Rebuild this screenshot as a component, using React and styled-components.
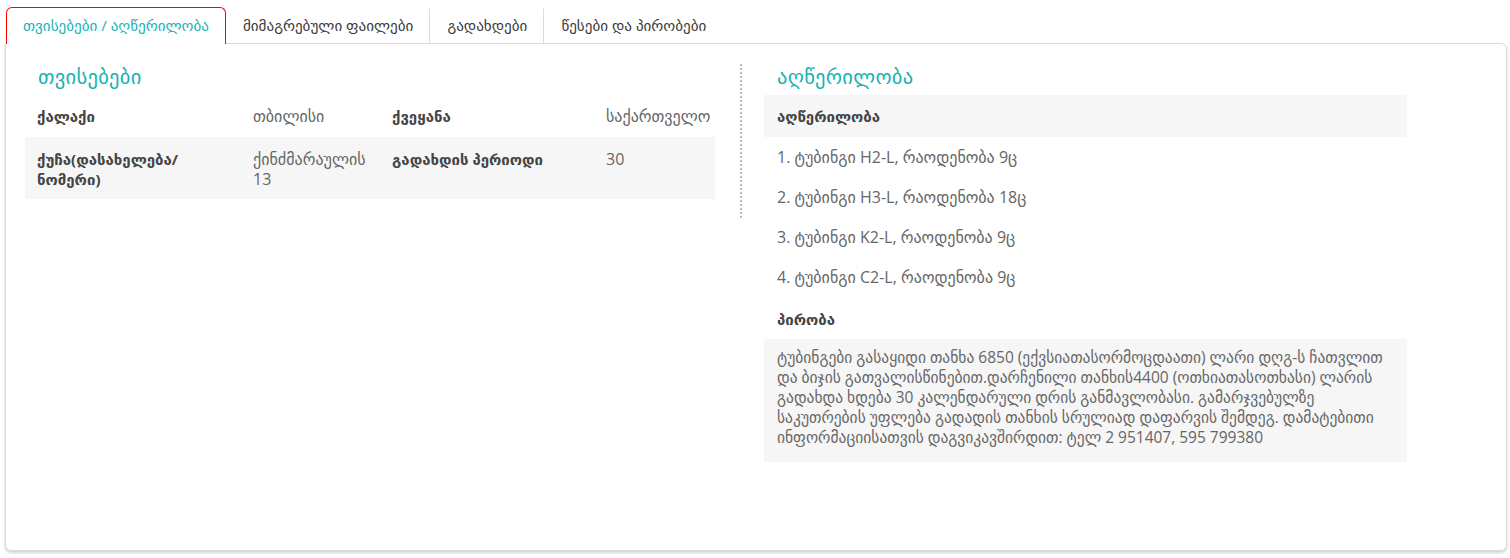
import React from 'react';
import styled, { createGlobalStyle } from 'styled-components';

const GlobalStyle = createGlobalStyle`
  body {
    margin: 0;
    background: #fff;
    font-family: "Open Sans", "DejaVu Sans", sans-serif;
    color: #555;
  }
`;

const tabs = ['თვისებები / აღწერილობა', 'მიმაგრებული ფაილები', 'გადახდები', 'წესები და პირობები'];

const properties = [
  [
    { label: 'ქალაქი', value: 'თბილისი' },
    { label: 'ქვეყანა', value: 'საქართველო' },
  ],
  [
    { label: 'ქუჩა(დასახელება/ ნომერი)', value: 'ქინძმარაულის 13' },
    { label: 'გადახდის პერიოდი', value: '30' },
  ],
];

const items = [
  '1. ტუბინგი H2-L, რაოდენობა 9ც',
  '2. ტუბინგი H3-L, რაოდენობა 18ც',
  '3. ტუბინგი K2-L, რაოდენობა 9ც',
  '4. ტუბინგი C2-L, რაოდენობა 9ც',
];

// broken the same way the original block wraps
const condition = [
  'ტუბინგები გასაყიდი თანხა 6850 (ექვსიათასორმოცდაათი) ლარი დღგ-ს ჩათვლით',
  'და ბიჯის გათვალისწინებით.დარჩენილი თანხის4400 (ოთხიათასოთხასი) ლარის',
  'გადახდა ხდება 30 კალენდარული დრის განმავლობასი. გამარჯვებულზე',
  'საკუთრების უფლება გადადის თანხის სრულიად დაფარვის შემდეგ. დამატებითი',
  'ინფორმაციისათვის დაგვიკავშირდით: ტელ 2 951407, 595 799380',
];

export default function App() {
  return (
    <>
      <GlobalStyle />
      <Page>
        <TabBar>
          {tabs.map((t, i) => (
            <Tab key={i} active={i === 0} last={i === tabs.length - 1}>
              {t}
            </Tab>
          ))}
        </TabBar>
        <Card>
          <Column>
            <Heading>თვისებები</Heading>
            <Table>
              {properties.map((row, i) => (
                <Row key={i} shaded={i % 2 === 1}>
                  {row.map((cell, j) => (
                    <React.Fragment key={j}>
                      <Label>{cell.label}</Label>
                      <Value>{cell.value}</Value>
                    </React.Fragment>
                  ))}
                </Row>
              ))}
            </Table>
          </Column>
          <Divider />
          <RightColumn>
            <Heading>აღწერილობა</Heading>
            <GrayBar>
              <Label>აღწერილობა</Label>
            </GrayBar>
            {items.map((it, i) => (
              <ListItem key={i}>{it}</ListItem>
            ))}
            <SubLabel>პირობა</SubLabel>
            <Paragraph>
              {condition.map((l, i) => (
                <Line key={i}>{l}</Line>
              ))}
            </Paragraph>
          </RightColumn>
        </Card>
      </Page>
    </>
  );
}

const Page = styled.div`
  padding: 6px 3px 7px 5px;
  height: 558px;
  box-sizing: border-box;
  display: flex;
  flex-direction: column;
`;

const TabBar = styled.div`
  display: flex;
  align-items: flex-end;
  height: 37px;
  padding-left: 1px;
  position: relative;
  z-index: 1;
`;

const Tab = styled.div`
  box-sizing: border-box;
  display: flex;
  align-items: center;
  padding: 0 16px 2px;
  font-size: 15.1px;
  white-space: nowrap;
  color: ${p => (p.active ? '#1ab2b2' : '#3a3a3a')};
  background: ${p => (p.active ? '#fff' : 'transparent')};
  border: 1px solid ${p => (p.active ? '#ff0000' : 'transparent')};
  border-bottom: none;
  border-radius: ${p => (p.active ? '6px 6px 0 0' : '0')};
  border-right: ${p => (p.active ? '1px solid #ff0000' : p.last ? 'none' : '1px solid #ddd')};
  margin-bottom: ${p => (p.active ? '-1px' : '0')};
  height: ${p => (p.active ? '37px' : '35px')};
`;

const Card = styled.div`
  flex: 1;
  display: flex;
  align-items: flex-start;
  border: 1px solid #dcdcdc;
  border-radius: 0 6px 6px 6px;
  box-shadow: 0 2px 3px rgba(0, 0, 0, 0.18);
  padding: 18px 20px 0 19px;
  background: #fff;
`;

const Column = styled.div`
  width: 690px;
  display: flex;
  flex-direction: column;
`;

const RightColumn = styled.div`
  width: 643px;
  display: flex;
  flex-direction: column;
`;

const Divider = styled.div`
  width: 0;
  height: 154px;
  border-left: 2px dotted #bbb;
  margin: 2px 22px 0 25px;
`;

const Heading = styled.h3`
  margin: 0 0 0 13px;
  height: 33px;
  font-size: 20.5px;
  line-height: 28px;
  font-weight: normal;
  color: #1ab2b2;
  letter-spacing: 0.3px;
`;

const Table = styled.div`
  display: flex;
  flex-direction: column;
`;

const Row = styled.div`
  display: grid;
  grid-template-columns: 216px 139px 214px 1fr;
  padding: ${p => (p.shaded ? '12px 0 10px 12px' : '11px 0 11px 12px')};
  box-sizing: border-box;
  background: ${p => (p.shaded ? '#f6f6f6' : '#fff')};
  line-height: 20px;
`;

const Label = styled.div`
  font-weight: bold;
  color: #444;
  font-size: 15px;
  line-height: 20px;
  padding-right: 20px;
`;

const Value = styled.div`
  color: #666;
  font-size: 16px;
  line-height: 20px;
  padding-right: 18px;
`;

const GrayBar = styled.div`
  background: #f6f6f6;
  padding: 11px 13px;
  height: 42px;
  box-sizing: border-box;
`;

const ListItem = styled.div`
  height: 40px;
  display: flex;
  align-items: center;
  padding-left: 13px;
  font-size: 16px;
  color: #666;
`;

const SubLabel = styled.div`
  padding: 12px 13px 10px;
  font-weight: bold;
  color: #444;
  font-size: 15px;
  line-height: 20px;
`;

const Paragraph = styled.div`
  background: #f6f6f6;
  padding: 8px 13px 15px;
  font-size: 15.5px;
  line-height: 20px;
  color: #666;
`;

const Line = styled.span`
  display: block;
  white-space: nowrap;
`;
